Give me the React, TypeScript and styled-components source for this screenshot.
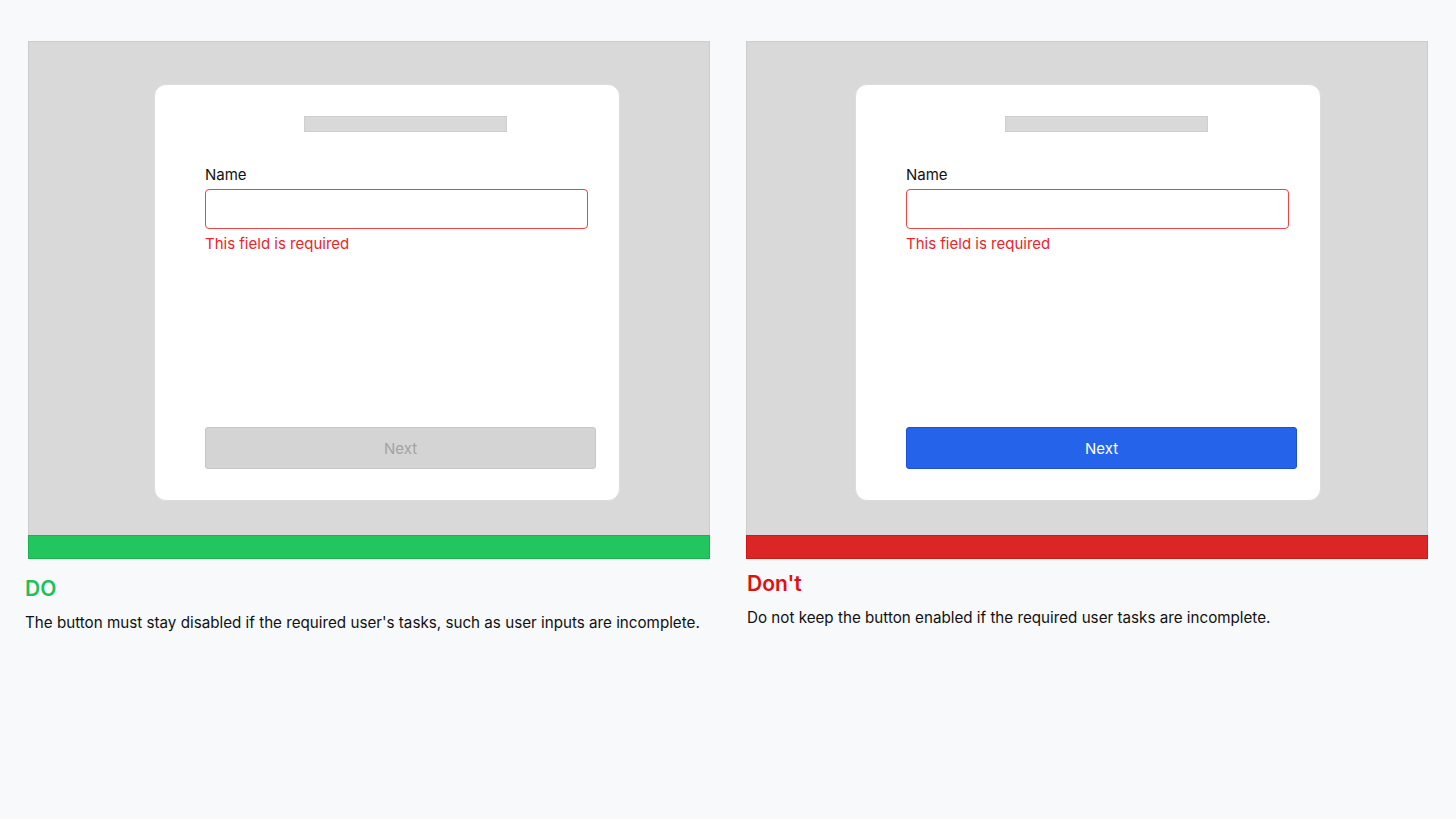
import styled, { createGlobalStyle } from 'styled-components'

const GlobalStyle = createGlobalStyle`
  html, body {
    margin: 0;
    padding: 0;
    background: #f8f9fb;
    font-family: Inter, "Noto Sans", sans-serif;
  }
`;

const Page = styled.div`
  display: flex;
  gap: 36px;
  padding: 41px 28px 0;
  min-height: 100vh;
  box-sizing: border-box;
`;

const Column = styled.div`
  width: 682px;
  display: flex;
  flex-direction: column;
`;

const Panel = styled.div`
  height: 494px;
  box-sizing: border-box;
  background: #d9d9d9;
  border: 1px solid #cdcdcd;
  border-bottom: none;
  display: flex;
  align-items: flex-start;
  padding-top: 42px;
`;

const Card = styled.div<{ $left: number }>`
  margin-left: ${(p) => p.$left}px;
  width: 466px;
  height: 417px;
  box-sizing: border-box;
  background: #fff;
  border: 1px solid #dcdcdc;
  border-radius: 12px;
  padding: 31px 23px 31px 50px;
  display: flex;
  flex-direction: column;
  align-items: flex-start;
`;

const TitleBar = styled.div`
  margin-left: 99px;
  width: 203px;
  height: 16px;
  box-sizing: border-box;
  background: #d9d9d9;
  border: 1px solid #cfcfcf;
`;

const Label = styled.div`
  margin-top: 34px;
  font-size: 15px;
  line-height: 18px;
  color: #111;
`;

const Input = styled.div`
  margin-top: 5px;
  width: 383px;
  height: 40px;
  box-sizing: border-box;
  border: 1px solid #ef4444;
  border-radius: 4px;
  background: #fff;
`;

const ErrorText = styled.div`
  margin-top: 6px;
  font-size: 15px;
  line-height: 18px;
  color: #e8262b;
`;

const Button = styled.div<{ $enabled?: boolean }>`
  margin-top: auto;
  width: 391px;
  height: 42px;
  box-sizing: border-box;
  border-radius: 3px;
  display: flex;
  align-items: center;
  justify-content: center;
  font-size: 15px;
  background: ${(p) => (p.$enabled ? '#2563eb' : '#d4d4d4')};
  border: 1px solid ${(p) => (p.$enabled ? '#1d4ed8' : '#c6c6c6')};
  color: ${(p) => (p.$enabled ? '#fff' : '#a3a3a3')};
`;

const StatusBar = styled.div<{ $good?: boolean }>`
  height: 24px;
  box-sizing: border-box;
  background: ${(p) => (p.$good ? '#22c55e' : '#dc2626')};
  border: 1px solid ${(p) => (p.$good ? '#16b34e' : '#d41515')};
`;

const Caption = styled.div<{ $top: number; $left: number }>`
  margin-top: ${(p) => p.$top}px;
  margin-left: ${(p) => p.$left}px;
`;

const Heading = styled.div<{ $good?: boolean }>`
  font-size: 21px;
  line-height: 26px;
  font-weight: 600;
  color: ${(p) => (p.$good ? '#1fc15a' : '#e01010')};
`;

const Description = styled.div`
  margin-top: 11px;
  font-size: 15.2px;
  line-height: 20px;
  color: #111;
`;

export default function App() {
  return (
    <>
      <GlobalStyle />
      <Page>
        <Column>
          <Panel>
            <Card $left={125}>
              <TitleBar />
              <Label>Name</Label>
              <Input />
              <ErrorText>This field is required</ErrorText>
              <Button>Next</Button>
            </Card>
          </Panel>
          <StatusBar $good />
          <Caption $top={17} $left={-3}>
            <Heading $good>DO</Heading>
            <Description>
              The button must stay disabled if the required user's tasks, such as user inputs are incomplete.
            </Description>
          </Caption>
        </Column>
        <Column>
          <Panel>
            <Card $left={108}>
              <TitleBar />
              <Label>Name</Label>
              <Input />
              <ErrorText>This field is required</ErrorText>
              <Button $enabled>Next</Button>
            </Card>
          </Panel>
          <StatusBar />
          <Caption $top={12} $left={1}>
            <Heading>Don't</Heading>
            <Description>
              Do not keep the button enabled if the required user tasks are incomplete.
            </Description>
          </Caption>
        </Column>
      </Page>
    </>
  )
}
